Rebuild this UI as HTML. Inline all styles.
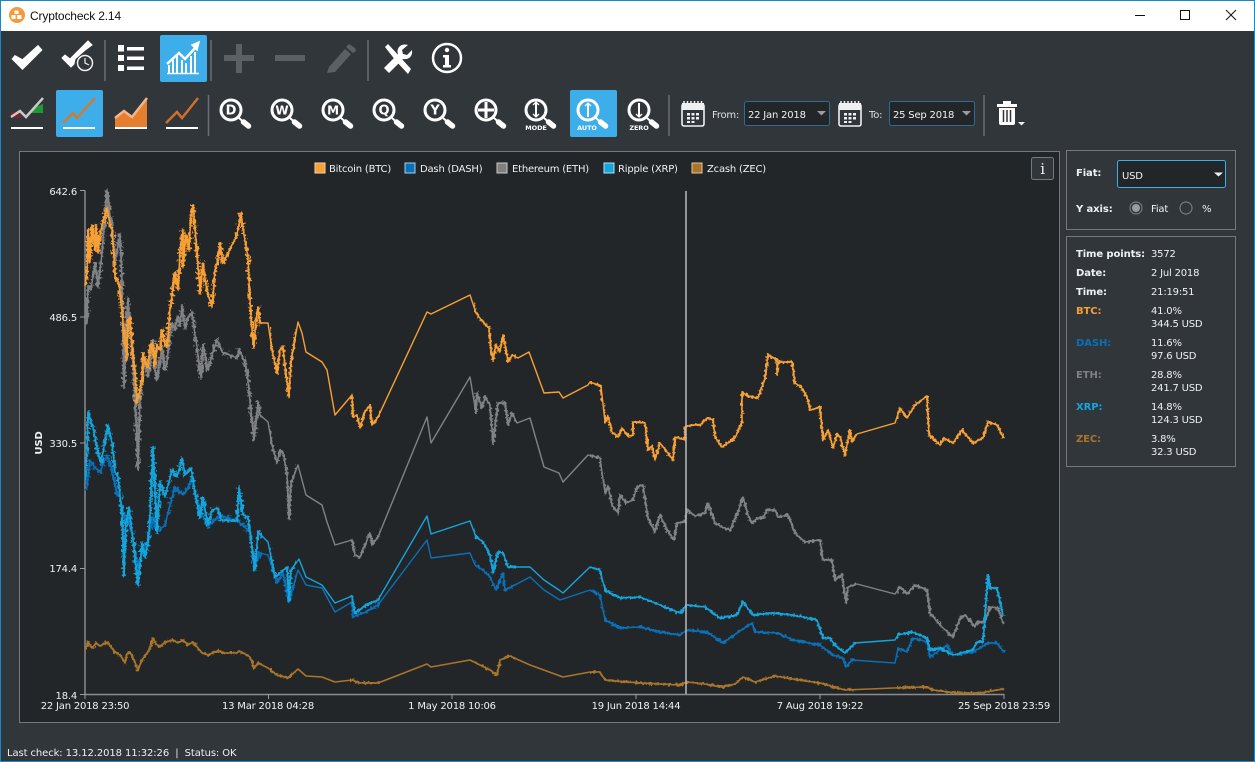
<!DOCTYPE html>
<html><head><meta charset="utf-8"><title>Cryptocheck 2.14</title>
<style>
html,body{margin:0;padding:0;background:#31363b;width:1255px;height:762px;overflow:hidden}
svg{display:block}
text{font-family:"DejaVu Sans","Liberation Sans",sans-serif;font-size:10px;fill:#eff0f1;letter-spacing:-.2px}
.b{font-weight:bold;letter-spacing:-.1px}
.ser{fill:none;stroke-linejoin:round;stroke-linecap:round}
</style></head><body>
<svg width="1255" height="762" viewBox="0 0 1255 762" xmlns="http://www.w3.org/2000/svg">
<defs>
<g id="mag"><circle cx="0" cy="0" r="10" fill="none" stroke="#fff" stroke-width="3"/><line x1="8" y1="8" x2="12" y2="11.500" stroke="#fff" stroke-width="2"/><line x1="12.500" y1="12" x2="17.500" y2="16" stroke="#fff" stroke-width="5.500" stroke-linecap="round"/></g>
<g id="cal"><rect x="0" y="3" width="22" height="22" rx="2" fill="none" stroke="#eff0f1" stroke-width="1.600"/><rect x="0" y="2" width="22" height="7" fill="#eff0f1"/><path d="M2 0v3M5.500 0v3M9 0v3M12.500 0v3M16 0v3M19.500 0v3" stroke="#eff0f1" stroke-width="1.500"/><path d="M5 12h3v2.500h-3zM9.500 12h3v2.500h-3zM14 12h3v2.500h-3zM5 16h3v2.500h-3zM9.500 16h3v2.500h-3zM14 16h3v2.500h-3zM5 20h3v2h-3zM9.500 20h3v2h-3z" fill="#eff0f1"/></g>
<clipPath id="cA"><rect x="85" y="150" width="177" height="560"/></clipPath>
<clipPath id="cB"><path d="M270 150h26v560h-26zM350 150h30v560h-30zM474 150h42v560h-42zM590 150h12v560h-12zM604 150h252v560h-252zM897 150h110v560h-110z"/></clipPath>
<filter id="nA" filterUnits="userSpaceOnUse" x="60" y="150" width="1000" height="560" color-interpolation-filters="sRGB"><feTurbulence type="fractalNoise" baseFrequency="0.4" numOctaves="2" seed="3" result="t"/><feDisplacementMap in="SourceGraphic" in2="t" scale="8" xChannelSelector="R" yChannelSelector="G"/></filter>
<filter id="nB" filterUnits="userSpaceOnUse" x="60" y="150" width="1000" height="560" color-interpolation-filters="sRGB"><feTurbulence type="fractalNoise" baseFrequency="0.4" numOctaves="2" seed="7" result="t"/><feDisplacementMap in="SourceGraphic" in2="t" scale="5" xChannelSelector="R" yChannelSelector="G"/></filter>
<polyline id="zec" class="ser" points="85,650 88,642 92,648 96,643 100,646 107,642 111,647 115,652 120,655 125,663 127,654 130,652 134,660 138,670 142,660 147,653 150,648 153,638 156,644 160,647 165,642 173,640 178,643 183,640 188,645 193,642 198,648 202,653 208,655 214,652 220,651 222,653 237,653 239,651 245,654 250,657 254,668 258,663 268,668 277,675 288,678 298,669 306,676 322,677 335,682 352,680 360,683 378,683 427,664 431,667 470,660 490,670 497,675 500,660 510,656 530,665 563,677 590,672 600,672 605,680 640,683 680,685 687,682 705,684 722,687 735,684 743,677 755,682 775,676 793,679 820,683 845,690 893,688 927,687 933,690 957,693 980,693 1003,689"/>
<polyline id="eth" class="ser" points="85,300 87,323 88,287 91,290 95,263 98,287 102,253 105,215 107,190 110,215 112,223 115,263 118,245 120,235 122,280 124,387 126,330 128,298 131,340 133,367 136,420 138,468 140,400 142,380 145,357 148,377 150,365 153,340 155,370 157,380 160,360 162,347 165,370 167,363 170,335 172,323 175,330 177,317 180,325 182,305 185,328 188,318 192,312 195,335 197,347 199,365 201,378 203,345 206,360 208,370 212,355 217,340 222,352 237,358 239,350 243,358 247,370 250,402 254,440 258,402 260,415 268,422 272,445 277,463 280,450 283,452 287,473 289,519 291,483 298,465 306,495 322,505 327,522 335,545 352,540 355,555 360,557 365,545 370,533 372,545 378,537 427,417 431,443 470,377 476,413 477,393 482,408 485,397 490,405 493,443 498,403 505,403 508,425 512,413 517,423 530,418 544,467 559,473 563,482 588,455 600,458 605,493 608,486 612,505 618,513 620,495 626,503 633,500 637,487 643,485 648,518 655,532 660,515 667,530 674,540 677,523 685,522 687,510 695,516 705,513 708,503 715,523 722,527 730,530 738,512 743,497 748,515 752,523 758,518 763,518 767,510 775,510 778,517 788,515 795,533 800,538 805,542 820,540 823,560 832,560 835,580 842,575 846,603 848,587 857,584 895,594 900,587 907,594 915,585 927,590 930,613 942,627 953,637 960,618 965,615 975,627 977,622 985,622 990,607 998,608 1003,623"/>
<polyline id="btc" class="ser" points="85,285 87,273 88,230 90,262 92,225 95,250 96,225 98,253 100,235 102,225 105,215 107,208 110,225 112,230 114,258 115,277 119,283 122,313 125,340 127,360 128,320 130,317 132,345 135,370 137,403 140,390 142,378 143,353 146,365 148,367 150,345 152,343 155,365 157,345 160,350 162,330 165,345 167,347 170,310 172,295 175,273 178,290 180,250 183,230 183,267 186,235 189,250 191,215 193,205 196,240 198,265 200,293 203,263 206,285 208,295 212,307 215,270 218,260 220,243 223,263 237,235 241,213 244,235 248,257 250,300 252,330 254,347 256,320 258,307 260,323 268,323 272,350 277,373 280,350 283,347 286,375 289,397 291,362 298,322 302,333 306,352 322,362 327,370 335,415 352,395 353,417 357,415 360,428 365,412 370,405 372,425 378,417 427,312 431,314 470,295 476,313 483,322 489,328 491,350 493,360 496,345 500,352 503,335 506,350 508,362 512,355 518,358 529,352 544,393 559,392 563,398 588,385 590,382 601,386 605,422 608,416 612,432 618,437 622,428 628,436 633,435 633,422 645,423 648,450 652,446 655,460 660,443 667,452 673,460 675,437 685,440 685,427 692,425 700,425 707,418 713,420 715,437 722,447 735,438 742,422 742,392 748,396 758,398 765,378 768,355 777,360 777,375 778,362 792,362 795,383 801,387 807,397 810,410 820,407 823,440 828,430 833,448 837,435 840,437 845,455 850,430 852,442 857,434 895,423 900,408 907,418 915,405 927,396 929,435 940,445 944,438 953,443 962,430 973,443 983,438 988,422 997,425 1003,437"/>
<polyline id="dash" class="ser" points="85,490 87,487 90,460 95,468 100,472 107,455 112,470 117,495 120,497 125,520 128,518 133,540 138,568 142,552 148,540 153,517 157,532 165,525 170,505 175,487 183,495 188,488 192,477 196,495 200,510 208,527 214,520 220,515 237,521 243,525 250,533 254,567 260,553 268,555 277,583 283,573 289,602 298,570 306,585 322,588 335,612 352,602 353,617 366,612 378,605 427,540 431,558 470,553 475,565 483,570 490,577 496,590 503,573 505,590 515,585 530,577 544,590 560,600 590,590 600,595 605,620 620,628 640,627 660,632 680,635 687,630 707,632 723,643 737,633 752,623 755,632 777,633 793,640 820,645 833,655 843,658 846,667 852,660 895,663 898,648 907,652 913,638 927,642 930,657 947,645 953,655 973,652 988,643 997,643 1004,652"/>
<polyline id="xrp" class="ser" points="85,480 87,450 88,412 93,427 98,453 101,463 108,425 112,443 115,472 118,477 122,513 124,575 126,523 129,507 133,540 138,585 142,543 145,557 148,543 150,517 153,447 157,532 160,482 165,497 172,470 177,477 182,458 185,475 191,468 195,493 200,518 203,498 208,525 212,510 218,508 221,520 237,521 239,487 243,515 248,517 255,570 258,532 268,542 275,577 287,567 289,600 291,570 299,559 306,577 322,585 335,603 352,596 355,613 366,605 378,600 427,516 431,534 470,521 476,537 483,542 490,555 493,573 498,552 503,553 508,567 517,567 530,567 544,580 559,590 563,593 590,567 600,570 605,590 620,598 640,597 660,605 680,613 687,605 705,607 720,618 737,615 743,602 753,615 773,613 793,615 817,620 823,638 830,638 835,645 845,653 855,643 895,640 898,635 912,632 927,638 930,650 940,648 953,655 973,650 977,642 983,642 988,575 990,588 997,588 1003,615"/>
</defs>
<rect width="1255" height="762" fill="#31363b"/>
<rect x="0" y="0" width="1255" height="31" fill="#fff"/>
<path d="M0.500 0.500H1254.500V761.500H0.500Z" fill="none" stroke="#1a87c9" stroke-width="1"/>
<circle cx="17" cy="15" r="8" fill="#f59a3c"/><path d="M14.500 10.500h4v3.500h-4zM11.500 15h4v4h-4zM17 15h4.500v4h-4.500z" fill="#fff"/>
<text x="30" y="20" style="font-family:'Liberation Sans',sans-serif;font-size:12px;fill:#111;letter-spacing:-.15px">Cryptocheck 2.14</text>
<path d="M1135 15.500h10" stroke="#111" stroke-width="1"/><rect x="1180.500" y="10.500" width="9" height="9" fill="none" stroke="#111"/><path d="M1226 10l10 10M1236 10l-10 10" stroke="#111" fill="none"/>

<!-- toolbar row 1 -->
<path d="M15 56l-2.500 3 10 10 19-19-3.500-4-15.500 14z" fill="#fff" stroke="#fff" stroke-width="1.500"/>
<path d="M65 55l-3 3 9 9 3-3 1-5 9-8 8-6-4-4-13 13-5 5z" fill="#fff" stroke="#fff"/>
<circle cx="85" cy="63" r="7.500" fill="#31363b" stroke="#eff0f1" stroke-width="1.500"/><path d="M85 58v5l4 2" stroke="#eff0f1" fill="none" stroke-width="1.200"/>
<path d="M105 40v41M211 40v41M368 40v41" stroke="#6b6f73" stroke-width="1.500"/>
<path d="M118 45h6v6.500h-6zM127 47h17v3.500h-17zM118 55h6v6h-6zM127 56.500h17v3.500h-17zM118 65h6v6h-6zM127 66.500h17v3.500h-17z" fill="#fff"/>
<rect x="160" y="35" width="47" height="47" rx="2" fill="#3daee9"/>
<path d="M167 64l12-11 6 6 12-13" fill="none" stroke="#fff" stroke-width="2.500"/><path d="M192 45l7-3-2 8z" fill="#fff" stroke="#fff" stroke-width="1.500"/>
<path d="M168 65h2v8h-2zM172 60h2v13h-2zM176 56h2v17h-2zM181 60h2v13h-2zM185 63h2v10h-2zM190 56h2v17h-2zM194 52h2v21h-2z" fill="#fff"/><path d="M167 73.500h32" stroke="#fff" stroke-width="1.500"/>
<path d="M236 44h6v11h12v6h-12v12h-6v-12h-12v-6h12z" fill="#5b6064"/>
<path d="M275 55h30v6h-30z" fill="#5b6064"/>
<path d="M327 73l2-6 16-18 6 5-16 18z M346 47l3-3 6 4 1 3-3 2z" fill="#5b6064"/>
<path d="M385 47l3-3 12 13 11 12-3 5-12-13z" fill="#fff"/><path d="M408 45l-6 5 1 4 4 1 5-5c1 6-3 10-9 9l-14 14-5-5 14-14c-2-6 3-11 10-9z" fill="#fff"/>
<circle cx="447" cy="58" r="14" fill="none" stroke="#fff" stroke-width="2.500"/><circle cx="447" cy="50" r="2.200" fill="#fff"/><path d="M443 55h6v10h2v2.500h-8v-2.500h2v-7.500h-2z" fill="#fff"/>

<!-- toolbar row 2 -->
<path d="M11 112h11l-2 -1-5 6-4 0z" fill="#7a1f2e"/><path d="M11 112h10v6H11z" fill="#7a1f2e"/><path d="M33 108l10-4v9H30z" fill="#1d9a36"/>
<path d="M11 117l9-6 6 6 17-19" fill="none" stroke="#c9c9c9" stroke-width="2.500"/><path d="M11 128h32" stroke="#fff" stroke-width="2"/>
<rect x="56" y="90" width="47" height="47" rx="2" fill="#3daee9"/>
<path d="M63 123l10-10 4 5 18-20" fill="none" stroke="#d07a35" stroke-width="2.500"/><path d="M63 128h32" stroke="#fff" stroke-width="2"/>
<path d="M115 127v-9l9-7 8 6 15-19v29z" fill="#e67e2f"/><path d="M115 118l9-7 8 6 15-19" fill="none" stroke="#f4b48a" stroke-width="2.500"/><path d="M115 128h32" stroke="#fff" stroke-width="2"/>
<path d="M166 123l11-11 5 6 16-20" fill="none" stroke="#d06e2c" stroke-width="2.500"/><path d="M166 128h32" stroke="#fff" stroke-width="2"/>
<path d="M208.500 95v41M669 95v41M984 95v41" stroke="#6b6f73" stroke-width="1.500"/>
<use href="#mag" x="231" y="110"/><text x="231" y="114.500" text-anchor="middle" class="b" style="font-size:13px;fill:#fff">D</text>
<use href="#mag" x="282" y="110"/><text x="282" y="114.500" text-anchor="middle" class="b" style="font-size:12px;fill:#fff">W</text>
<use href="#mag" x="333" y="110"/><text x="333" y="114.500" text-anchor="middle" class="b" style="font-size:12px;fill:#fff">M</text>
<use href="#mag" x="384" y="110"/><text x="384" y="114.500" text-anchor="middle" class="b" style="font-size:13px;fill:#fff">Q</text>
<use href="#mag" x="435" y="110"/><text x="435" y="114.500" text-anchor="middle" class="b" style="font-size:13px;fill:#fff">Y</text>
<use href="#mag" x="486" y="110"/><path d="M486 102v16M478 110h16" stroke="#fff" stroke-width="3"/>
<use href="#mag" x="536" y="110"/><path d="M536 103v13" stroke="#fff" stroke-width="2"/><path d="M533 105l3-3 3 3M533 114l3 3 3-3" fill="none" stroke="#fff" stroke-width="1.300"/>
<text x="536" y="130" text-anchor="middle" class="b" style="font-size:6.500px;fill:#fff">MODE</text>
<rect x="570" y="90" width="47" height="47" rx="2" fill="#3daee9"/>
<use href="#mag" x="588" y="110"/><path d="M588 104v13" stroke="#fff" stroke-width="2"/><path d="M585 106l3-3 3 3" fill="none" stroke="#fff" stroke-width="1.300"/>
<text x="587" y="130" text-anchor="middle" class="b" style="font-size:6.500px;fill:#fff">AUTO</text>
<use href="#mag" x="639" y="110"/><path d="M639 103v13" stroke="#fff" stroke-width="2"/><path d="M636 114l3 3 3-3" fill="none" stroke="#fff" stroke-width="1.300"/>
<text x="639" y="130" text-anchor="middle" class="b" style="font-size:6.500px;fill:#fff">ZERO</text>
<use href="#cal" x="682" y="101"/><use href="#cal" x="839" y="101"/>
<text x="712" y="118" style="fill:#dfe0e1">From:</text><text x="869" y="118" style="fill:#dfe0e1">To:</text>
<rect x="744.500" y="101.500" width="85" height="24" rx="2" fill="#232629" stroke="#2f6d8e"/>
<text x="748" y="118">22 Jan 2018</text><path d="M817 111h9l-4.500 4.500z" fill="#9a9c9e"/>
<rect x="889.500" y="101.500" width="85" height="24" rx="2" fill="#232629" stroke="#2f6d8e"/>
<text x="893" y="118">25 Sep 2018</text><path d="M962 111h9l-4.500 4.500z" fill="#9a9c9e"/>
<path d="M997 104h20v3h-20zM1003 101h8v3h-8z" fill="#fff"/><path d="M999 108h16v15a2 2 0 0 1-2 2h-12a2 2 0 0 1-2-2z" fill="#fff"/><path d="M1003.500 110v12M1007 110v12M1010.500 110v12" stroke="#31363b" stroke-width="1.500"/>
<path d="M1018 122h7l-3.500 3.500z" fill="#eff0f1"/>

<!-- chart frame -->
<rect x="19.500" y="151.500" width="1040" height="571" fill="#232629" stroke="#76797c"/>
<rect x="315" y="163" width="10" height="10" fill="#f7a035" stroke="#f6d7ae"/><text x="329" y="172">Bitcoin (BTC)</text>
<rect x="405" y="163" width="10" height="10" fill="#0a70b8" stroke="#a8cfe8"/><text x="420" y="172">Dash (DASH)</text>
<rect x="497" y="163" width="10" height="10" fill="#808080" stroke="#c9c9c9"/><text x="512" y="172">Ethereum (ETH)</text>
<rect x="604" y="163" width="10" height="10" fill="#14a5dc" stroke="#b5e0f2"/><text x="618" y="172">Ripple (XRP)</text>
<rect x="692" y="163" width="10" height="10" fill="#a8752a" stroke="#e0c89c"/><text x="707" y="172">Zcash (ZEC)</text>
<rect x="1031.500" y="157.500" width="22" height="22" rx="2" fill="#31363b" stroke="#76797c"/><text x="1042.500" y="174" text-anchor="middle" style="font-family:'DejaVu Serif','Liberation Serif',serif;font-size:15px">i</text>

<!-- axes -->
<path d="M85 190.500V694.500H1004" fill="none" stroke="#8a8c8e" stroke-width="1.500"/>
<path d="M80 190.500h5M80 317h5M80 443h5M80 568.500h5M80 694.500h5M85 694v5M268.500 694v5M452 694v5M636 694v5M820 694v5M1004 694v5" stroke="#9a9c9e"/>
<text x="77" y="195" text-anchor="end">642.6</text><text x="77" y="321" text-anchor="end">486.5</text><text x="77" y="447" text-anchor="end">330.5</text><text x="77" y="572" text-anchor="end">174.4</text><text x="77" y="699" text-anchor="end">18.4</text>
<text transform="translate(42,443) rotate(-90)" text-anchor="middle" class="b">USD</text>
<text x="85" y="709" text-anchor="middle">22 Jan 2018 23:50</text><text x="268" y="709" text-anchor="middle">13 Mar 2018 04:28</text><text x="452" y="709" text-anchor="middle">1 May 2018 10:06</text><text x="636" y="709" text-anchor="middle">19 Jun 2018 14:44</text><text x="820" y="709" text-anchor="middle">7 Aug 2018 19:22</text><text x="1004" y="709" text-anchor="middle">25 Sep 2018 23:59</text>

<!-- series -->
<g stroke="#a8752a"><use href="#zec" stroke-width="1.600"/><g clip-path="url(#cA)"><g filter="url(#nB)"><use href="#zec" stroke-width="2"/></g></g><g clip-path="url(#cB)"><g filter="url(#nB)"><use href="#zec" stroke-width="2"/></g></g></g>
<g stroke="#808285"><use href="#eth" stroke-width="1.400"/><g clip-path="url(#cA)"><g filter="url(#nA)"><use href="#eth" stroke-width="2.400"/></g></g><g clip-path="url(#cB)"><g filter="url(#nB)"><use href="#eth" stroke-width="2.200"/></g></g></g>
<g stroke="#f7a035"><use href="#btc" stroke-width="1.400"/><g clip-path="url(#cA)"><g filter="url(#nA)"><use href="#btc" stroke-width="2.400"/></g></g><g clip-path="url(#cB)"><g filter="url(#nB)"><use href="#btc" stroke-width="2.200"/></g></g></g>
<g stroke="#0a70b8"><use href="#dash" stroke-width="1.400"/><g clip-path="url(#cA)"><g filter="url(#nA)"><use href="#dash" stroke-width="2.400"/></g></g><g clip-path="url(#cB)"><g filter="url(#nB)"><use href="#dash" stroke-width="2.200"/></g></g></g>
<g stroke="#14a5dc"><use href="#xrp" stroke-width="1.400"/><g clip-path="url(#cA)"><g filter="url(#nA)"><use href="#xrp" stroke-width="2.400"/></g></g><g clip-path="url(#cB)"><g filter="url(#nB)"><use href="#xrp" stroke-width="2.200"/></g></g></g>

<path d="M686 191V694" stroke="#b9babb" stroke-width="1.500"/>

<!-- right panels -->
<rect x="1066.500" y="150.500" width="169" height="79" fill="none" stroke="#76797c"/>
<text x="1076" y="176" class="b">Fiat:</text>
<rect x="1117.500" y="160.500" width="108" height="27" rx="2" fill="#232629" stroke="#3daee9"/>
<text x="1122" y="179">USD</text><path d="M1214 172.500h9l-4.500 4z" fill="#eff0f1"/>
<text x="1076" y="212" class="b">Y axis:</text>
<circle cx="1136" cy="208" r="6" fill="none" stroke="#76797c" stroke-width="1.200"/><circle cx="1136" cy="208" r="4" fill="#9a9c9e"/>
<text x="1151" y="212">Fiat</text>
<circle cx="1186" cy="208" r="6" fill="none" stroke="#76797c" stroke-width="1.200"/>
<text x="1202" y="212">%</text>
<rect x="1066.500" y="236.500" width="169" height="230" fill="none" stroke="#76797c"/>
<text x="1076" y="257" class="b">Time points:</text><text x="1151" y="257">3572</text>
<text x="1076" y="276" class="b">Date:</text><text x="1151" y="276">2 Jul 2018</text>
<text x="1076" y="295" class="b">Time:</text><text x="1151" y="295">21:19:51</text>
<text x="1076" y="314" class="b" style="fill:#f7a035">BTC:</text><text x="1151" y="314">41.0%</text><text x="1151" y="327">344.5 USD</text>
<text x="1076" y="346" class="b" style="fill:#0a70b8">DASH:</text><text x="1151" y="346">11.6%</text><text x="1151" y="359">97.6 USD</text>
<text x="1076" y="378" class="b" style="fill:#808080">ETH:</text><text x="1151" y="378">28.8%</text><text x="1151" y="391">241.7 USD</text>
<text x="1076" y="410" class="b" style="fill:#14a5dc">XRP:</text><text x="1151" y="410">14.8%</text><text x="1151" y="423">124.3 USD</text>
<text x="1076" y="442" class="b" style="fill:#a8752a">ZEC:</text><text x="1151" y="442">3.8%</text><text x="1151" y="455">32.3 USD</text>

<text x="7" y="756" style="white-space:pre;letter-spacing:-.1px">Last check: 13.12.2018 11:32:26  |  Status: OK</text>
</svg>
</body></html>
